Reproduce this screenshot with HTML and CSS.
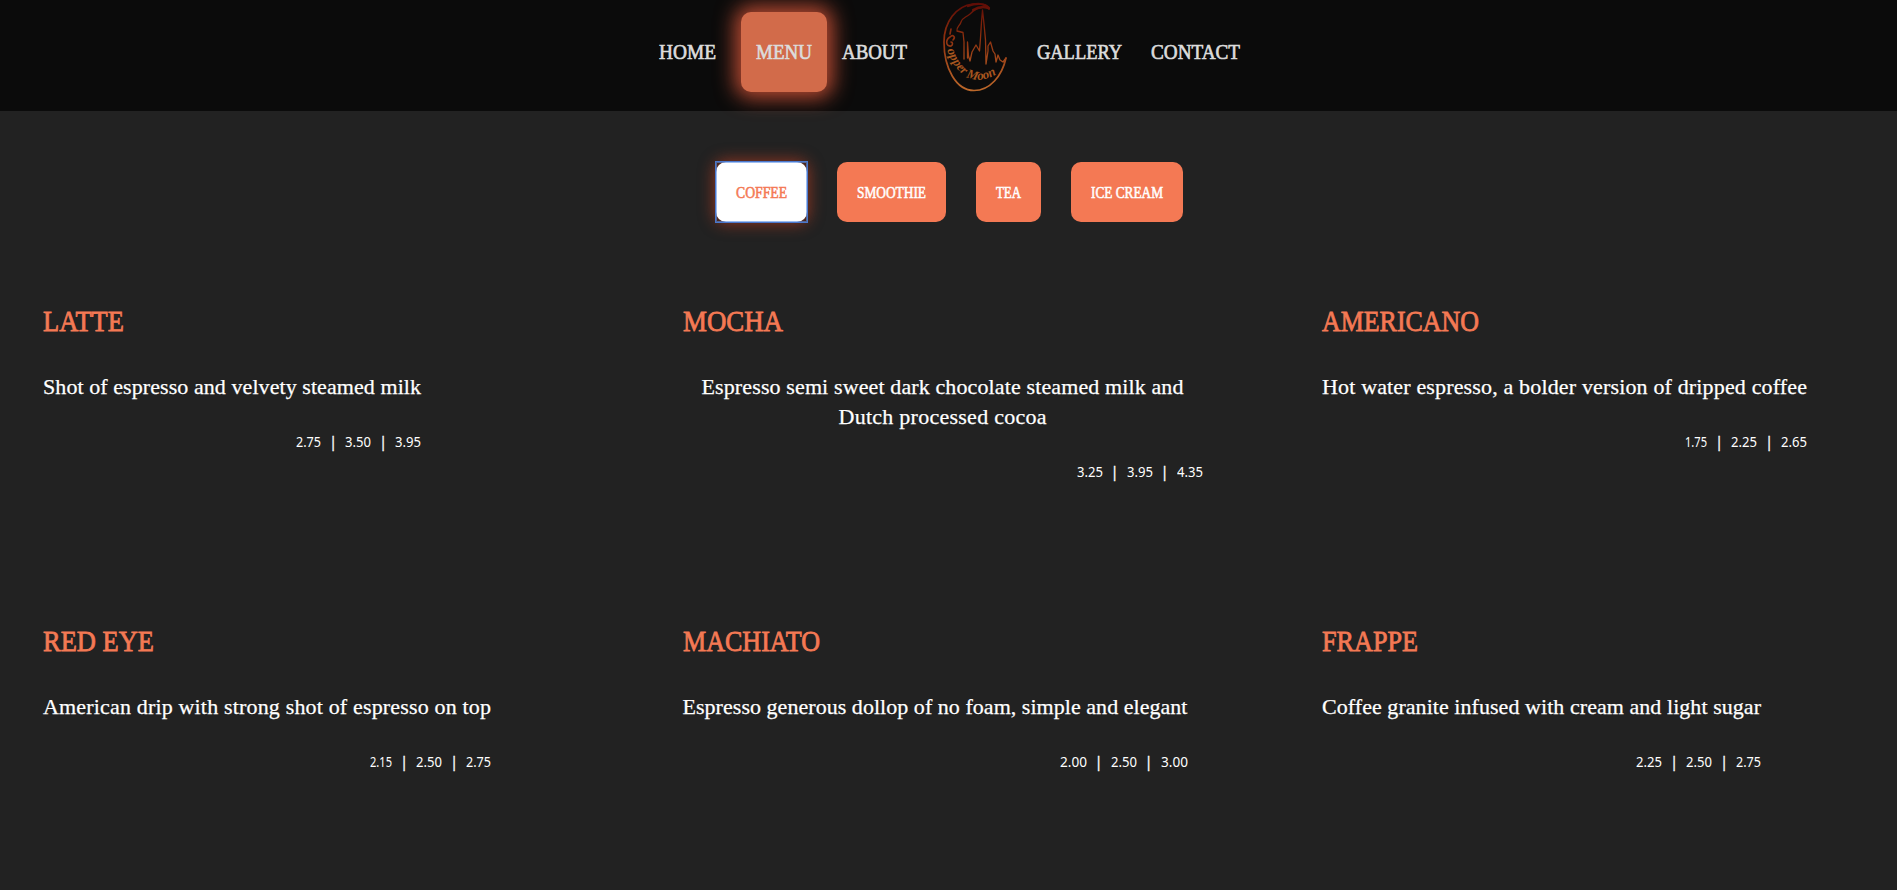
FILE: index.html
```html
<!DOCTYPE html>
<html lang="en">
<head>
<meta charset="utf-8">
<title>Copper Moon - Menu</title>
<link rel="stylesheet" href="styles.css">
</head>
<body>
<header class="header">
  <nav class="nav">
    <a class="link home"><span data-w="57">HOME</span></a>
    <a class="link active"><span data-w="56">MENU</span></a>
    <a class="link"><span data-w="65">ABOUT</span></a>
    <svg class="logo" viewBox="0 0 110 100" width="110" height="100" fill="none" stroke="url(#copper)" stroke-linecap="round" stroke-linejoin="round">
      <defs>
        <linearGradient id="copper" gradientUnits="userSpaceOnUse" x1="0" y1="3" x2="0" y2="92">
          <stop offset="0" stop-color="#5e0c06"/><stop offset=".35" stop-color="#8a2c0d"/><stop offset="1" stop-color="#be6a2b"/>
        </linearGradient>
        <path id="nameArc" d="M27 50C31 62 39 74 49 78C59 82 70 80 88 67"/>
      </defs>
      <path stroke-width="1.7" d="M69 9C68 5 61 3 53 4C36 6 24 22 24 42C24 68 36 90.500 54 90.500C70 90.500 82 76 86 58"/>
      <path stroke-width="2.2" d="M48 6C56 3 65 3 69 8C64 6 58 7 53 10"/>
      <path stroke-width="1.3" d="M69 9C62 6 55 9 50 14C45 18 42 18 41 22C40 26 36 27 37 31L43 32.500L44 42V59M47.500 58V42L48.500 56L50 61L52 52L56 45L59.500 51L60.500 38L61.500 22L62.500 10L64 24L65.500 40L66 64L68 51V46L70.500 42L73 51L75 54L76 62L78 55L80 60L83 62L86 58"/>
      <path stroke-width="1.6" d="M33 40C36 37 33 34 30 37C25 40 26 47 31 46C33 45 33 42 31 42M31 29L30 34"/>
      <text class="logo-text"><textPath href="#nameArc">opper Moon</textPath></text>
    </svg>
    <a class="link"><span data-w="85">GALLERY</span></a>
    <a class="link last"><span data-w="89">CONTACT</span></a>
  </nav>
</header>
<main>
  <div class="tabs">
    <button class="tab selected"><span data-w="51">COFFEE</span></button>
    <button class="tab"><span data-w="69">SMOOTHIE</span></button>
    <button class="tab"><span data-w="25">TEA</span></button>
    <button class="tab"><span data-w="72">ICE CREAM</span></button>
  </div>
  <section class="menu">
    <article class="item"><h2><span data-w="81">LATTE</span></h2><p><span data-w="378">Shot of espresso and velvety steamed milk</span></p><div class="price"><span data-w="25">2.75</span><i>|</i><span data-w="26">3.50</span><i>|</i><span data-w="26">3.95</span></div></article>
    <article class="item wide"><h2><span data-w="100">MOCHA</span></h2><p><span data-w="482">Espresso semi sweet dark chocolate steamed milk and</span><br><span data-w="208">Dutch processed cocoa</span></p><div class="price"><span data-w="26">3.25</span><i>|</i><span data-w="26">3.95</span><i>|</i><span data-w="26">4.35</span></div></article>
    <article class="item"><h2><span data-w="157">AMERICANO</span></h2><p><span data-w="485">Hot water espresso, a bolder version of dripped coffee</span></p><div class="price"><span data-w="22">1.75</span><i>|</i><span data-w="26">2.25</span><i>|</i><span data-w="26">2.65</span></div></article>
    <article class="item"><h2><span data-w="111">RED EYE</span></h2><p><span data-w="448">American drip with strong shot of espresso on top</span></p><div class="price"><span data-w="22">2.15</span><i>|</i><span data-w="26">2.50</span><i>|</i><span data-w="25">2.75</span></div></article>
    <article class="item"><h2><span data-w="137">MACHIATO</span></h2><p><span data-w="505">Espresso generous dollop of no foam, simple and elegant</span></p><div class="price"><span data-w="27">2.00</span><i>|</i><span data-w="26">2.50</span><i>|</i><span data-w="27">3.00</span></div></article>
    <article class="item"><h2><span data-w="96">FRAPPE</span></h2><p><span data-w="439">Coffee granite infused with cream and light sugar</span></p><div class="price"><span data-w="26">2.25</span><i>|</i><span data-w="26">2.50</span><i>|</i><span data-w="25">2.75</span></div></article>
  </section>
</main>
<script src="fit.js"></script>
</body>
</html>
```
FILE: styles.css
```css
* { box-sizing: border-box; }
body { margin: 0; height: 890px; background: #222; color: #fff; font-family: "Liberation Serif", serif; }
.header { height: 111px; background: #0b0b0b; }
.nav { display: flex; align-items: flex-start; padding: 0 0 0 644px; }
.link { display: flex; align-items: center; height: 80px; margin-top: 12px; padding: 0 15px; font-size: 22px; color: #dcdcdc; -webkit-text-stroke: .7px #dcdcdc; }
.home { margin-right: 10px; }
.last { margin-left: -1px; }
.active { background: #d26b4a; border-radius: 10px; box-shadow: 0 0 20px 6px #b84a32; }
.logo { margin: 0 -8px 0 -2px; flex: none; }
.logo-text { font: italic bold 13px "Liberation Serif", serif; fill: #a8561f; stroke: none; }
[data-w] { display: inline-block; white-space: nowrap; transform-origin: left center; text-align: left; }
.tabs { display: flex; gap: 30px; padding: 51px 0 0 716px; }
.tab { height: 60px; padding: 1px 20px 0; border: 0; border-radius: 10px; background: #f47954; color: #fff; font: 16px "Liberation Serif", serif; -webkit-text-stroke: .55px currentColor; }
.tab.selected { position: relative; background: #fff; color: #f47954; box-shadow: 0 0 15px 2px rgba(244, 72, 36, .5); }
.selected::after { content: ""; position: absolute; inset: -1px; border: 1px solid #4a78cc; box-shadow: inset 0 0 0 1px rgba(91, 143, 230, .6); }
.menu { display: grid; grid-template-columns: repeat(3, 639.5px); grid-template-rows: 320px auto; padding: 79px 0 0 43px; }
.item { justify-self: start; align-self: start; }
.wide { width: 520px; }
h2 { margin: 0; font-size: 30px; line-height: 40px; font-weight: 400; color: #f47954; -webkit-text-stroke: .8px #f47954; }
p { margin: 31px 0 0; font-size: 22px; line-height: 30px; text-align: center; -webkit-text-stroke: .25px #fff; }
.price { display: flex; justify-content: flex-end; align-items: center; gap: 10px; margin-top: 30px; height: 20px; font: 14px/20px "Noto Sans", sans-serif; }
.price i { width: 4px; font-style: normal; display: flex; justify-content: center; -webkit-text-stroke: .3px #fff; }
```
FILE: fit.js
```js
document.querySelectorAll('[data-w]').forEach(el => {
  const target = Number(el.dataset.w);
  const natural = el.getBoundingClientRect().width;
  if (natural > target) {
    el.style.transform = 'scaleX(' + target / natural + ')';
  } else {
    el.style.letterSpacing = (target - natural) / (el.textContent.length - 1) + 'px';
  }
  el.style.width = target + 'px';
});
```
